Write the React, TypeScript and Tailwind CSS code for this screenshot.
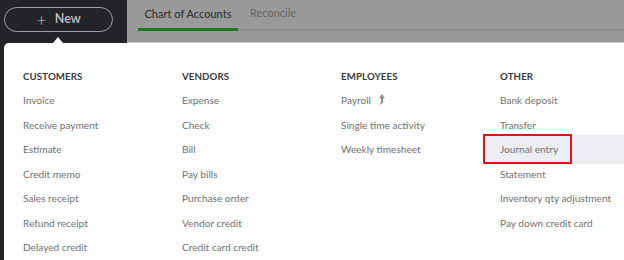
import React from "react";

const columns = [
  {
    title: "CUSTOMERS",
    items: ["Invoice", "Receive payment", "Estimate", "Credit memo", "Sales receipt", "Refund receipt", "Delayed credit"],
  },
  {
    title: "VENDORS",
    items: ["Expense", "Check", "Bill", "Pay bills", "Purchase order", "Vendor credit", "Credit card credit"],
  },
  {
    title: "EMPLOYEES",
    items: ["Payroll", "Single time activity", "Weekly timesheet"],
  },
  {
    title: "OTHER",
    items: ["Bank deposit", "Transfer", "Journal entry", "Statement", "Inventory qty adjustment", "Pay down credit card"],
  },
];

function UpgradeIcon() {
  return (
    <svg width="7" height="11" viewBox="0 0 7 11" className="ml-[7px] mt-[-3px]">
      <path d="M4 0 L7 4.2 L5.2 4.2 L5.2 6.5 Q5.2 9.6 1.6 11 Q3 9 3 6.5 L3 4.2 L1 4.2 Z" fill="#8d8e92" />
    </svg>
  );
}

export default function App() {
  return (
    <div
      className="relative w-[624px] h-[260px] overflow-hidden bg-[#232427] flex flex-col"
      style={{ fontFamily: "Lato, 'Open Sans', sans-serif" }}
    >
      {/* Top bar */}
      <div className="flex h-[43px] shrink-0">
        <div className="w-[127px] pl-[4px] pt-[7px]">
          <div className="w-[109px] h-[25px] rounded-full border-[1.5px] border-[#a2a2a2] flex items-center justify-center gap-[8px] text-[#c3c3c3]">
            <span className="text-[18px] font-light leading-none mt-[-2px]">+</span>
            <span className="text-[12.5px] font-semibold">New</span>
          </div>
        </div>
        <div className="flex-1 bg-[#9a9a9a] flex flex-col border-b border-[#c7c7c7]">
          <div className="ml-[11px] h-[31px] flex items-end border-b-2 border-[#8d8d8d]">
            <div className="w-[100px] h-[31px] flex items-center justify-center border-b-[3px] border-[#1d781d] mb-[-2px] text-[11px] font-medium text-[#303134]">
              Chart of Accounts
            </div>
            <div className="h-[31px] pl-[12px] flex items-center text-[11px] text-[#626366]">Reconcile</div>
          </div>
        </div>
      </div>

      {/* Caret */}
      <div className="absolute left-[53px] top-[37px] w-0 h-0 border-l-[5px] border-r-[5px] border-b-[6px] border-l-transparent border-r-transparent border-b-white" />

      {/* Menu panel */}
      <div className="flex-1 ml-[4px] bg-white rounded-tl-[5px] pl-[19px] pt-[21px]">
        <div className="grid grid-cols-[159px_159px_159px_1fr]">
          {columns.map((col) => (
            <div key={col.title} className="flex flex-col">
              <div className="h-[24.5px] flex items-center text-[9.7px] font-bold tracking-[0.1px] text-[#393a3d]">
                {col.title}
              </div>
              {col.items.map((item) => (
                <div key={item} className="relative h-[24.5px] flex items-center text-[10.1px] text-[#707176]">
                  {item === "Journal entry" && (
                    <>
                      <div className="absolute left-[-15px] right-0 top-[-3px] bottom-[-2px] bg-[#eceef1]" />
                      <div className="absolute left-[-17px] w-[89px] top-[-4px] bottom-[-2px] border-[2.5px] border-[#e0141e]" />
                    </>
                  )}
                  <span className="relative">{item}</span>
                  {item === "Payroll" && <UpgradeIcon />}
                </div>
              ))}
            </div>
          ))}
        </div>
      </div>
    </div>
  );
}
